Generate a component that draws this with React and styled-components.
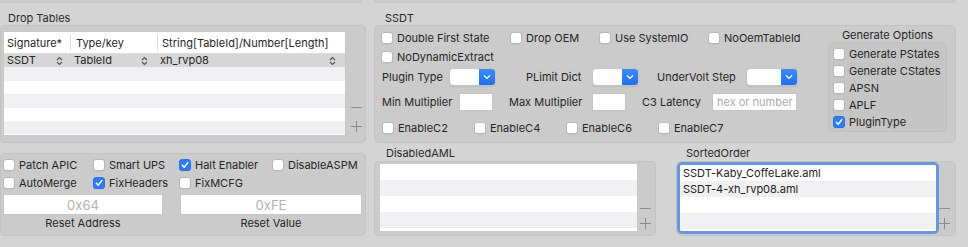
import React from 'react';
import styled, { createGlobalStyle } from 'styled-components';

const Global = createGlobalStyle`
  html, body { margin: 0; padding: 0; background: #d4d4d4; }
  body {
    font-family: Inter, "Noto Sans", "Liberation Sans", sans-serif;
    font-size: 11px;
    color: #262626;
    -webkit-font-smoothing: antialiased;
  }
  * { box-sizing: border-box; }
`;

const Page = styled.div`
  width: 968px;
  height: 247px;
  overflow: hidden;
  background: #d4d4d4;
  display: flex;
  flex-direction: column;
`;

const StubRow = styled.div`
  display: flex;
  height: 3px;
  gap: 12px;
`;

const Stub = styled.div`
  width: ${p => p.$w}px;
  background: #cbcbcb;
  border: 1px solid #c4c4c4;
  border-top: none;
  border-radius: 0 0 5px 5px;
`;

const Row = styled.div`
  display: flex;
  align-items: ${p => p.$align || 'flex-start'};
  margin-top: ${p => p.$mt || 0}px;
`;

const Section = styled.div`
  display: flex;
  flex-direction: column;
  width: ${p => p.$w}px;
  margin-left: ${p => p.$ml || 0}px;
`;

const SectionLabel = styled.div`
  height: 14px;
  line-height: 14px;
  padding-left: ${p => p.$pl}px;
  margin-bottom: ${p => p.$mb || 0}px;
  color: #2a2a2a;
`;

const Box = styled.div`
  height: ${p => p.$h}px;
  background: #cbcbcb;
  border: 1px solid #c3c3c3;
  border-radius: 5px;
  display: flex;
  padding: ${p => p.$pad || '0'};
`;

/* ---------- table ---------- */
const Table = styled.div`
  width: 343px;
  height: 105px;
  background: #fff;
  border: 1px solid #c8c8c8;
  display: flex;
  flex-direction: column;
  overflow: hidden;
`;

const HeaderRow = styled.div`
  display: flex;
  height: 22px;
  flex: none;
  border-bottom: 1px solid #dedede;
`;

const HeaderCell = styled.div`
  width: ${p => p.$w}px;
  display: flex;
  align-items: center;
  padding-left: ${p => p.$pl}px;
  position: relative;
  color: #262626;
  &::after {
    content: '';
    display: ${p => (p.$divider ? 'block' : 'none')};
    position: absolute;
    right: 0;
    top: 3px;
    bottom: 3px;
    width: 1px;
    background: #dadada;
  }
`;

const TRow = styled.div`
  display: flex;
  height: 13.4px;
  flex: none;
  background: ${p => (p.$selected ? '#d6d6d6' : p.$alt ? '#f0f0f2' : '#ffffff')};
`;

const TCell = styled.div`
  width: ${p => p.$w}px;
  display: flex;
  align-items: center;
  justify-content: space-between;
  padding: 0 ${p => p.$pr}px 0 ${p => p.$pl}px;
  line-height: 13px;
`;

const Stepper = () => (
  <svg width="7" height="10" viewBox="0 0 7 10">
    <path d="M1 4 L3.5 1.5 L6 4 M1 6 L3.5 8.5 L6 6" fill="none" stroke="#555" strokeWidth="1.1" />
  </svg>
);

/* ---------- side +/- ---------- */
const SideButtons = styled.div`
  display: flex;
  flex-direction: column;
  justify-content: flex-end;
  align-items: center;
  width: 11px;
  margin-left: ${p => p.$ml}px;
  gap: ${p => p.$gap}px;
  padding-bottom: ${p => p.$pb}px;
`;

const Minus = styled.div`
  width: 11px;
  height: 1px;
  background: #8f8f8f;
`;

const Plus = () => (
  <svg width="11" height="11" viewBox="0 0 11 11">
    <path d="M5.5 0 V11 M0 5.5 H11" stroke="#8a8a8a" strokeWidth="1" />
  </svg>
);

/* ---------- checkbox ---------- */
const CheckWrap = styled.label`
  display: flex;
  align-items: center;
  gap: 4px;
  height: 12px;
  width: ${p => (p.$w ? `${p.$w}px` : 'auto')};
  white-space: nowrap;
  color: #262626;
`;

const Box12 = styled.span`
  width: 12px;
  height: 12px;
  flex: none;
  border-radius: 3px;
  display: flex;
  align-items: center;
  justify-content: center;
  background: ${p => (p.$on ? '#2f7bf6' : '#ffffff')};
  border: 1px solid ${p => (p.$on ? '#2a72e8' : '#b8b8b8')};
  box-shadow: 0 0.5px 0.5px rgba(0, 0, 0, 0.08);
`;

const Check = ({ label, on, w }) => (
  <CheckWrap $w={w}>
    <Box12 $on={on}>
      {on && (
        <svg width="10" height="10" viewBox="0 0 10 10">
          <path d="M2.3 5.2 L4.2 7.2 L7.8 2.6" fill="none" stroke="#fff" strokeWidth="1.5" strokeLinecap="round" strokeLinejoin="round" />
        </svg>
      )}
    </Box12>
    {label}
  </CheckWrap>
);

/* ---------- bottom-left ---------- */
const CheckGrid = styled.div`
  display: grid;
  grid-template-columns: 90px 86px 93px auto;
  grid-auto-rows: 12px;
  row-gap: 6px;
`;

const FieldsRow = styled.div`
  display: flex;
  gap: 17px;
  margin-top: 5px;
`;

const FieldCol = styled.div`
  display: flex;
  flex-direction: column;
  align-items: center;
  width: ${p => p.$w}px;
`;

const WideField = styled.div`
  width: 100%;
  height: 21px;
  background: #fff;
  border: 1px solid #c6c6c6;
  display: flex;
  align-items: center;
  justify-content: center;
  font-size: 13px;
  color: #b3b3b3;
`;

const FieldCaption = styled.div`
  height: 14px;
  line-height: 14px;
  margin-top: 1px;
  color: #262626;
`;

const BLInner = styled.div`
  display: flex;
  flex-direction: column;
  padding: 5px 0 0 2px;
`;

/* ---------- SSDT ---------- */
const SSDTGrid = styled.div`
  display: grid;
  grid-template-rows: 19px 17px 25px 29px 12px;
  padding: 6px 0 0 6px;
`;

const Line = styled.div`
  display: flex;
  align-items: center;
  height: ${p => p.$h}px;
  margin-left: ${p => p.$ml || 0}px;
`;

const Group = styled.div`
  display: flex;
  align-items: center;
  width: ${p => (p.$w ? `${p.$w}px` : 'auto')};
`;

const GLabel = styled.span`
  width: ${p => p.$w}px;
  white-space: nowrap;
  color: #262626;
`;

const PopupShell = styled.div`
  width: ${p => p.$w}px;
  height: 18px;
  display: flex;
  border-radius: 4px;
  overflow: hidden;
  border: 1px solid #c4c4c4;
  background: #fff;
  box-shadow: 0 0.5px 1px rgba(0, 0, 0, 0.08);
`;

const PopupArrow = styled.div`
  margin-left: auto;
  width: 16px;
  background: linear-gradient(#3f8bf8, #1f6ff0);
  display: flex;
  align-items: center;
  justify-content: center;
`;

const Popup = ({ w }) => (
  <PopupShell $w={w}>
    <PopupArrow>
      <svg width="8" height="6" viewBox="0 0 8 6">
        <path d="M1.3 1.8 L4 4.4 L6.7 1.8" fill="none" stroke="#fff" strokeWidth="1.3" strokeLinecap="round" strokeLinejoin="round" />
      </svg>
    </PopupArrow>
  </PopupShell>
);

const SmallInput = styled.div`
  width: ${p => p.$w}px;
  height: 18px;
  background: #fff;
  border: 1px solid #c4c4c4;
  color: #ababab;
  font-size: 11px;
  line-height: 16px;
  padding-left: 4px;
  white-space: nowrap;
  overflow: hidden;
`;

const GenCol = styled.div`
  margin-left: auto;
  margin-right: 8px;
  width: 119px;
  padding-top: 2px;
  display: flex;
  flex-direction: column;
`;

const GenTitle = styled.div`
  height: 14px;
  line-height: 14px;
  text-align: center;
  color: #262626;
`;

const GenBox = styled.div`
  height: 90px;
  background: #c5c5c5;
  border: 1px solid #bfbfbf;
  border-radius: 5px;
  padding: 5px 4px;
  display: flex;
  flex-direction: column;
  gap: 5px;
`;

/* ---------- lists ---------- */
const List = styled.div`
  width: ${p => p.$w}px;
  height: ${p => p.$h}px;
  background: #fff;
  display: flex;
  flex-direction: column;
  overflow: hidden;
  margin-top: ${p => p.$mt}px;
  margin-left: ${p => p.$ml}px;
  box-shadow: ${p => (p.$focus ? '0 0 0 3px #6798de' : '0 0 0 1px #c9c9c9')};
  border-radius: ${p => (p.$focus ? '2px' : '0')};
`;

const LRow = styled.div`
  height: 16px;
  flex: none;
  line-height: 16px;
  padding-left: 3px;
  background: ${p => (p.$alt ? '#f0f0f2' : '#ffffff')};
  color: #222;
  white-space: nowrap;
`;

const tableRows = [0, 1, 2, 3, 4, 5, 6];
const listRows = [0, 1, 2, 3, 4];

export default function App() {
  return (
    <>
      <Global />
      <Page>
        <StubRow>
          <Stub $w={362} />
          <Stub $w={582} />
        </StubRow>

        <Row $mt={8}>
          <Section $w={366}>
            <SectionLabel $pl={8}>Drop Tables</SectionLabel>
            <Box $h={118} $pad="5px 0 0 2px">
              <Table>
                <HeaderRow>
                  <HeaderCell $w={67} $pl={3} $divider>Signature*</HeaderCell>
                  <HeaderCell $w={87} $pl={5} $divider>Type/key</HeaderCell>
                  <HeaderCell $w={187} $pl={4}>String[TableId]/Number[Length]</HeaderCell>
                </HeaderRow>
                {tableRows.map(i => (
                  <TRow key={i} $selected={i === 0} $alt={i % 2 === 1}>
                    {i === 0 && (
                      <>
                        <TCell $w={67} $pl={3} $pr={8}>SSDT<Stepper /></TCell>
                        <TCell $w={87} $pl={3} $pr={10}>TableId<Stepper /></TCell>
                        <TCell $w={187} $pl={2} $pr={9}>xh_rvp08<Stepper /></TCell>
                      </>
                    )}
                  </TRow>
                ))}
              </Table>
              <SideButtons $ml={5} $gap={13} $pb={10}>
                <Minus />
                <Plus />
              </SideButtons>
            </Box>
          </Section>

          <Section $w={582} $ml={8}>
            <SectionLabel $pl={11}>SSDT</SectionLabel>
            <Box $h={118}>
              <SSDTGrid>
                <Line $h={12}>
                  <Check label="Double First State" w={129} />
                  <Check label="Drop OEM" w={89} />
                  <Check label="Use SystemIO" w={109} />
                  <Check label="NoOemTableId" />
                </Line>
                <Line $h={12}>
                  <Check label="NoDynamicExtract" />
                </Line>
                <Line $h={18} $ml={1}>
                  <Group $w={144}>
                    <GLabel $w={67}>Plugin Type</GLabel>
                    <Popup w={47} />
                  </Group>
                  <Group $w={131}>
                    <GLabel $w={66}>PLimit Dict</GLabel>
                    <Popup w={47} />
                  </Group>
                  <Group>
                    <GLabel $w={89}>UnderVolt Step</GLabel>
                    <Popup w={52} />
                  </Group>
                </Line>
                <Line $h={18} $ml={1}>
                  <Group $w={127}>
                    <GLabel $w={77}>Min Multiplier</GLabel>
                    <SmallInput $w={34} />
                  </Group>
                  <Group $w={133}>
                    <GLabel $w={83}>Max Multiplier</GLabel>
                    <SmallInput $w={34} />
                  </Group>
                  <Group>
                    <GLabel $w={70}>C3 Latency</GLabel>
                    <SmallInput $w={85}>hex or number</SmallInput>
                  </Group>
                </Line>
                <Line $h={12} $ml={1}>
                  <Check label="EnableC2" w={92} />
                  <Check label="EnableC4" w={92} />
                  <Check label="EnableC6" w={92} />
                  <Check label="EnableC7" />
                </Line>
              </SSDTGrid>
              <GenCol>
                <GenTitle>Generate Options</GenTitle>
                <GenBox>
                  <Check label="Generate PStates" />
                  <Check label="Generate CStates" />
                  <Check label="APSN" />
                  <Check label="APLF" />
                  <Check label="PluginType" on />
                </GenBox>
              </GenCol>
            </Box>
          </Section>
        </Row>

        <Row $mt={3} $align="flex-end">
          <Section $w={366}>
            <Box $h={83}>
              <BLInner>
                <CheckGrid>
                  <Check label="Patch APIC" />
                  <Check label="Smart UPS" />
                  <Check label="Halt Enabler" on />
                  <Check label="DisableASPM" />
                  <Check label="AutoMerge" />
                  <Check label="FixHeaders" on />
                  <Check label="FixMCFG" />
                </CheckGrid>
                <FieldsRow>
                  <FieldCol $w={160}>
                    <WideField>0x64</WideField>
                    <FieldCaption>Reset Address</FieldCaption>
                  </FieldCol>
                  <FieldCol $w={182}>
                    <WideField>0xFE</WideField>
                    <FieldCaption>Reset Value</FieldCaption>
                  </FieldCol>
                </FieldsRow>
              </BLInner>
            </Box>
          </Section>

          <Section $w={282} $ml={8}>
            <SectionLabel $pl={12} $mb={1}>DisabledAML</SectionLabel>
            <Box $h={75}>
              <List $w={257} $h={67} $mt={2} $ml={5}>
                {listRows.map(i => <LRow key={i} $alt={i % 2 === 1} />)}
              </List>
              <SideButtons $ml={3} $gap={9} $pb={6}>
                <Minus />
                <Plus />
              </SideButtons>
            </Box>
          </Section>

          <Section $w={280} $ml={20}>
            <SectionLabel $pl={10} $mb={1}>SortedOrder</SectionLabel>
            <Box $h={75}>
              <List $w={256} $h={66} $mt={3} $ml={3} $focus>
                <LRow>SSDT-Kaby_CoffeLake.aml</LRow>
                <LRow $alt>SSDT-4-xh_rvp08.aml</LRow>
                <LRow />
                <LRow $alt />
                <LRow />
              </List>
              <SideButtons $ml={3} $gap={9} $pb={6}>
                <Minus />
                <Plus />
              </SideButtons>
            </Box>
          </Section>
        </Row>
      </Page>
    </>
  );
}
